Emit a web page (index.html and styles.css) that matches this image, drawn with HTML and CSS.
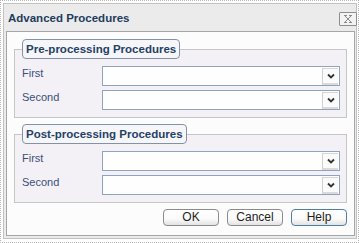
FILE: index.html
```html
<!DOCTYPE html>
<html>
<head>
<meta charset="utf-8">
<link rel="stylesheet" href="styles.css">
</head>
<body>
<div class="dlg">
  <div class="win">
    <div class="titlebar">
      <span class="title">Advanced Procedures</span>
      <span class="close">
        <svg width="16" height="12" viewBox="0 0 16 12"><path d="M4 2.5h3M9 2.5h3M4 9.5h3M9 9.5h3M5 3l6 6M11 3l-6 6" stroke="#8a8a8a" stroke-width="1" fill="none"/></svg>
      </span>
    </div>
    <div class="panel">
      <fieldset class="group">
        <legend class="legend">Pre-processing Procedures</legend>
        <div class="rows">
          <label class="lbl">First</label>
          <div class="select"><span class="arrow"><svg width="8" height="6" viewBox="0 0 8 6"><path d="M1 1.5l3 3 3-3" stroke="#333" stroke-width="1.8" fill="none"/></svg></span></div>
          <label class="lbl">Second</label>
          <div class="select"><span class="arrow"><svg width="8" height="6" viewBox="0 0 8 6"><path d="M1 1.5l3 3 3-3" stroke="#333" stroke-width="1.8" fill="none"/></svg></span></div>
        </div>
      </fieldset>
      <fieldset class="group second-group">
        <legend class="legend">Post-processing Procedures</legend>
        <div class="rows">
          <label class="lbl">First</label>
          <div class="select"><span class="arrow"><svg width="8" height="6" viewBox="0 0 8 6"><path d="M1 1.5l3 3 3-3" stroke="#333" stroke-width="1.8" fill="none"/></svg></span></div>
          <label class="lbl">Second</label>
          <div class="select"><span class="arrow"><svg width="8" height="6" viewBox="0 0 8 6"><path d="M1 1.5l3 3 3-3" stroke="#333" stroke-width="1.8" fill="none"/></svg></span></div>
        </div>
      </fieldset>
      <div class="buttons">
        <button class="btn">OK</button>
        <button class="btn">Cancel</button>
        <button class="btn btn-help">Help</button>
      </div>
    </div>
  </div>
</div>
</body>
</html>
```
FILE: styles.css
```css
* { box-sizing: border-box; }
html, body { margin: 0; padding: 0; background: #ffffff; }
body { font-family: "Liberation Sans", Arial, sans-serif; }

.dlg {
  width: 359px;
  height: 243px;
  border: 1px dotted #b8b8b8;
  padding: 2px 1px 3px 2px;
  display: flex;
}
.win {
  flex: 1;
  border: 1px solid #c2c2c2;
  background: #ebebeb;
  display: flex;
  flex-direction: column;
  padding: 0 1px 2px 2px;
}
.titlebar {
  height: 27px;
  display: flex;
  align-items: center;
  justify-content: space-between;
  padding-left: 2px;
}
.title {
  font-size: 11.5px;
  font-weight: bold;
  color: #1f3c5e;
}
.close {
  width: 18px;
  height: 14px;
  border: 1px solid #8e8e8e;
  border-radius: 1px;
  background: #f3f3f3;
  display: flex;
  align-items: center;
  justify-content: center;
  margin-right: -2px;
  margin-top: 2px;
}
.panel {
  flex: 1;
  border: 1px solid #a6a6a6;
  background: #fbfcfb;
  padding: 7px 7px 0 7px;
  display: flex;
  flex-direction: column;
}
.group {
  margin: 0;
  border: 1px solid #c6c6c6;
  background: #f3f1f5;
  padding: 7px 6px 7px 7px;
  min-width: 0;
}
.second-group { margin-top: 6px; }
.legend {
  margin-left: 0;
  padding: 0 3px;
  height: 20px;
  line-height: 18px;
  border: 1px solid #8292aa;
  border-radius: 4px;
  background: #f6f5f8;
  font-size: 11.5px;
  font-weight: bold;
  color: #1f4266;
}
.rows {
  display: grid;
  grid-template-columns: 80px 1fr;
  row-gap: 4px;
  align-items: center;
}
.lbl {
  font-size: 11px;
  color: #3a4f79;
  position: relative;
  top: -3px;
}
.select {
  height: 20px;
  border: 1px solid #8fa3c1;
  background: #fdfefd;
  display: flex;
  justify-content: flex-end;
  padding: 1px 1px 0 0;
}
.arrow {
  width: 16px;
  height: 17px;
  border-left: 1px solid #cfcfcf;
  border-top: 1px solid #d6d6d6;
  border-bottom: 2px solid #dadada;
  background: #fbfbfb;
  display: flex;
  align-items: center;
  justify-content: center;
}
.buttons {
  display: flex;
  justify-content: flex-end;
  gap: 8px;
  margin-top: 6px;
}
.btn {
  width: 56px;
  height: 17px;
  padding: 0;
  border: 1px solid #8c8c8c;
  border-radius: 4px;
  background: linear-gradient(#ffffff 0%, #fafafa 60%, #e2e2e2 100%);
  font-family: "Liberation Sans", Arial, sans-serif;
  font-size: 12px;
  color: #1e1e1e;
  line-height: 15px;
}
.btn-help { border-color: #4f7ea6; }
```
